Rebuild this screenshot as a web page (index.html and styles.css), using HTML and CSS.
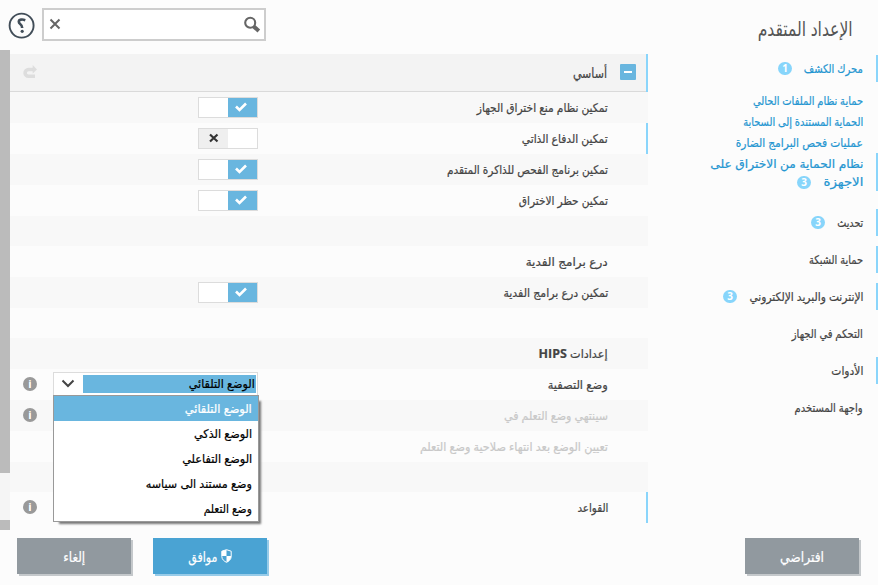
FILE: index.html
```html
<!DOCTYPE html>
<html lang="ar" dir="rtl">
<head>
    <meta charset="UTF-8">
    <meta name="viewport" content="width=device-width, initial-scale=1.0">
    <title>الإعداد المتقدم</title>
    <link rel="stylesheet" href="styles.css">
</head>
<body>
    <div class="window">
        <nav class="sidebar">
            <h1><span data-w="95">الإعداد المتقدم</span></h1>
            <a class="nav-item active changed"><span data-w="59">محرك الكشف</span><b class="badge">1</b></a>
            <div class="sub-nav">
                <a><span data-w="110">حماية نظام الملفات الحالي</span></a>
                <a><span data-w="120">الحماية المستندة إلى السحابة</span></a>
                <a><span data-w="127">عمليات فحص البرامج الضارة</span></a>
                <a class="changed two-lines"><span data-w="153">نظام الحماية من الاختراق على</span><br><span data-w="40">الاجهزة</span><b class="badge">3</b></a>
            </div>
            <a class="nav-item changed"><span data-w="26">تحديث</span><b class="badge">3</b></a>
            <a class="nav-item changed"><span data-w="54">حماية الشبكة</span></a>
            <a class="nav-item changed"><span data-w="114">الإنترنت والبريد الإلكتروني</span><b class="badge">3</b></a>
            <a class="nav-item"><span data-w="71">التحكم في الجهاز</span></a>
            <a class="nav-item changed"><span data-w="32">الأدوات</span></a>
            <a class="nav-item"><span data-w="68">واجهة المستخدم</span></a>
        </nav>

        <main class="content">
            <div class="topbar">
                <div class="search">
                    <svg class="magnifier" width="18" height="18" viewBox="0 0 18 18">
                        <circle cx="7.2" cy="6.8" r="5" fill="none" stroke="#666" stroke-width="2.1"/>
                        <path d="M10.5 10.2 L15.8 15" stroke="#666" stroke-width="4"/>
                    </svg>
                    <svg class="clear" width="12" height="12" viewBox="0 0 12 12">
                        <path d="M1.5 1.5 L10.5 10.5 M10.5 1.5 L1.5 10.5" stroke="#666" stroke-width="2"/>
                    </svg>
                </div>
                <svg class="help" width="28" height="28" viewBox="0 0 28 28">
                    <circle cx="13.6" cy="14.6" r="12" fill="none" stroke="#414d58" stroke-width="1.9"/>
                    <path d="M17.3 9.2 C14.5 8.2 10.8 8.2 10.8 10.8 C10.8 13.4 14.2 12.6 14.2 17" fill="none" stroke="#414d58" stroke-width="2.6"/>
                    <circle cx="14.2" cy="20.3" r="1.6" fill="#414d58"/>
                </svg>
            </div>

            <div class="scroll-area">
                <section class="panel">
                    <header class="panel-header changed">
                        <span class="collapse"></span>
                        <h2><span data-w="34">أساسي</span></h2>
                        <svg class="undo" width="14" height="14" viewBox="0 0 14 14">
                            <path d="M12 11.3 H5.5 A3.3 3.3 0 0 1 5.5 4.5 H10.5" fill="none" stroke="#ddd" stroke-width="3.6"/>
                            <path d="M9.7 0 L14 4.5 L9.7 8.5 Z" fill="#ddd"/>
                        </svg>
                    </header>
                    <div class="row">
                        <span data-w="131">تمكين نظام منع اختراق الجهاز</span>
                        <i class="toggle on"><svg width="12" height="10" viewBox="0 0 12 10"><path d="M1 4.5 L4.5 8 L11 1.5" fill="none" stroke="#fff" stroke-width="2.6"/></svg></i>
                    </div>
                    <div class="row changed">
                        <span data-w="86">تمكين الدفاع الذاتي</span>
                        <i class="toggle off"><svg width="10" height="10" viewBox="0 0 10 10"><path d="M1 1.5 L8.5 8.5 M8.5 1.5 L1 8.5" stroke="#333" stroke-width="2.2"/></svg></i>
                    </div>
                    <div class="row">
                        <span data-w="161">تمكين برنامج الفحص للذاكرة المتقدم</span>
                        <i class="toggle on"><svg width="12" height="10" viewBox="0 0 12 10"><path d="M1 4.5 L4.5 8 L11 1.5" fill="none" stroke="#fff" stroke-width="2.6"/></svg></i>
                    </div>
                    <div class="row">
                        <span data-w="89">تمكين حظر الاختراق</span>
                        <i class="toggle on"><svg width="12" height="10" viewBox="0 0 12 10"><path d="M1 4.5 L4.5 8 L11 1.5" fill="none" stroke="#fff" stroke-width="2.6"/></svg></i>
                    </div>
                    <div class="row spacer"></div>
                    <div class="row"><span data-w="82">درع برامج الفدية</span></div>
                    <div class="row">
                        <span data-w="105">تمكين درع برامج الفدية</span>
                        <i class="toggle on"><svg width="12" height="10" viewBox="0 0 12 10"><path d="M1 4.5 L4.5 8 L11 1.5" fill="none" stroke="#fff" stroke-width="2.6"/></svg></i>
                    </div>
                    <div class="row spacer"></div>
                    <div class="row"><span data-w="69">إعدادات <b>HIPS</b></span></div>
                    <div class="row">
                        <span data-w="60">وضع التصفية</span>
                        <div class="select">
                            <div class="select-value"><span data-w="66">الوضع التلقائي</span></div>
                            <svg class="chevron" width="14" height="9" viewBox="0 0 14 9"><path d="M1.5 1.5 L7 7 L12.5 1.5" fill="none" stroke="#444" stroke-width="2"/></svg>
                            <ul class="options">
                                <li class="selected"><span data-w="67">الوضع التلقائي</span></li>
                                <li><span data-w="58">الوضع الذكي</span></li>
                                <li><span data-w="70">الوضع التفاعلي</span></li>
                                <li><span data-w="106">وضع مستند الى سياسه</span></li>
                                <li><span data-w="48">وضع التعلم</span></li>
                            </ul>
                        </div>
                        <i class="info">i</i>
                    </div>
                    <div class="row disabled"><span data-w="104">سينتهي وضع التعلم في</span><i class="info">i</i></div>
                    <div class="row disabled"><span data-w="188">تعيين الوضع بعد انتهاء صلاحية وضع التعلم</span></div>
                    <div class="row spacer"></div>
                    <div class="row changed"><span data-w="31">القواعد</span><i class="info">i</i></div>
                </section>
                <div class="scrollbar"><div class="thumb"></div><div class="thumb-end"></div></div>
            </div>
        </main>
    </div>

    <footer class="buttons">
        <button class="btn"><span data-w="44">افتراضي</span></button>
        <button class="btn primary">
            <svg width="11" height="14" viewBox="0 0 11 14">
                <path d="M5.5 .7 L10.2 2.2 V7.5 C10.2 10.5 7.5 12.5 5.5 13.3 C3.5 12.5 .8 10.5 .8 7.5 V2.2 Z" fill="#4aa3d3" stroke="#fff"/>
                <path d="M5.5 .7 V7 H.8 V2.2 Z M5.5 7 H10.2 C10.2 10.5 7.5 12.5 5.5 13.3 Z" fill="#fff"/>
            </svg>
            <span data-w="29">موافق</span>
        </button>
        <button class="btn"><span data-w="22">إلغاء</span></button>
    </footer>

    <script src="labels.js"></script>
</body>
</html>
```
FILE: styles.css
```css
* {
    box-sizing: border-box;
}

body {
    width: 878px;
    height: 585px;
    margin: 0;
    overflow: hidden;
    background: #fcfcfc;
    color: #444;
    font-family: "Open Sans", "DejaVu Sans Condensed", "DejaVu Sans", sans-serif;
    font-size: 12px;
}

h1, h2 {
    margin: 0;
    font-weight: normal;
}

span[data-w] {
    display: inline-block;
    white-space: nowrap;
    transform-origin: right center;
    -webkit-text-stroke: 0.2px;
}

.window {
    display: flex;
    height: 530px;
}

/* Navigation */
.sidebar {
    width: 230px;
    display: flex;
    flex-direction: column;
    gap: 10px;
}

.sidebar h1 {
    height: 45px;
    padding: 14px 25px 0 0;
    font-size: 20px;
    line-height: 30px;
    color: #555;
}

.sidebar h1 span {
    -webkit-text-stroke: 0;
}

.nav-item {
    display: flex;
    align-items: center;
    height: 27px;
    padding-right: 13px;
    border-right: 2px solid transparent;
}

.active, .sub-nav {
    color: #2596d1;
}

.sub-nav {
    height: 107px;
    display: flex;
    flex-direction: column;
}

.sub-nav a {
    height: 21px;
    line-height: 18px;
    padding-right: 13px;
    border-right: 2px solid transparent;
}

.sub-nav .two-lines {
    height: 38px;
    margin-top: -2px;
    padding-top: 2px;
}

.sidebar .changed, .row.changed, .panel-header.changed {
    border-right-color: #8ad5fb;
}

.badge {
    display: inline-block;
    width: 14px;
    height: 13px;
    margin-right: 12px;
    border-radius: 7px;
    background: #87d5fb;
    color: #fff;
    font-size: 10px;
    line-height: 13px;
    text-align: center;
}

/* Search and help */
.content {
    width: 648px;
}

.topbar {
    height: 50px;
    display: flex;
    justify-content: flex-end;
    padding: 8px 0 0 8px;
    gap: 6px;
}

.search {
    width: 224px;
    height: 33px;
    display: flex;
    justify-content: space-between;
    align-items: center;
    padding: 0 3px 0 5px;
    border: 2px solid #cdcdcd;
    background: #fff;
}

.clear {
    margin-bottom: 1px;
}

.help {
    margin-top: 3px;
}

/* Settings */
.scroll-area {
    display: flex;
    height: 480px;
}

.panel {
    width: 638px;
    padding-top: 4px;
}

.panel-header {
    display: flex;
    align-items: center;
    height: 38px;
    padding: 0 10px 0 13px;
    border-right: 2px solid transparent;
    background: linear-gradient(#f3f3f3, #f3f3f3) padding-box;
    box-shadow: inset 0 -1px #dadada;
}

.panel-header h2 {
    margin: 0 13px 1px 0;
    font-size: 14px;
}

.collapse {
    display: flex;
    align-items: center;
    justify-content: center;
    width: 16px;
    height: 16px;
    margin-bottom: 2px;
    border-radius: 1px;
    background: #69b6df;
}

.collapse::after {
    content: "";
    width: 8px;
    height: 2px;
    background: #fff;
}

.undo {
    margin: 0 auto 2px 0;
}

.row {
    display: flex;
    align-items: center;
    height: 31px;
    padding: 0 38px 0 13px;
    border-right: 2px solid transparent;
}

.row:nth-child(even) {
    background: #f8f8f8;
}

.row.spacer {
    height: 30px;
}

.row.disabled {
    color: #c8c8c8;
}

.toggle {
    display: flex;
    align-items: center;
    width: 60px;
    height: 21px;
    margin: 0 auto 0 175px;
    border: 1px solid #dcdcdc;
}

.toggle svg {
    margin-bottom: 1px;
}

.toggle.on {
    padding-right: 10px;
    background: linear-gradient(to left, #69b6df 29px, #fff 29px);
}

.toggle.off {
    padding-right: 38px;
    background: linear-gradient(to right, #efefef 29px, #fff 29px);
}

.info {
    width: 14px;
    height: 14px;
    margin: 0 auto 2px 0;
    border-radius: 50%;
    background: #999;
    color: #fff;
    font-size: 11px;
    font-style: normal;
    font-weight: bold;
    line-height: 14px;
    text-align: center;
}

/* Drop-down */
.select {
    position: relative;
    display: flex;
    align-items: center;
    width: 205px;
    height: 24px;
    margin: 0 auto 2px 16px;
    padding: 0 1px 0 7px;
    border: 1px solid #dcdcdc;
    background: #fff;
    color: #000;
}

.select + .info {
    margin-right: 0;
}

.select-value {
    display: flex;
    align-items: center;
    width: 173px;
    height: 18px;
    padding-right: 1px;
    background: #69b6df;
}

.chevron {
    margin-right: 8px;
}

.options {
    position: absolute;
    top: 22px;
    left: -1px;
    z-index: 1;
    width: 206px;
    margin: 0;
    padding: 0;
    border: 1px solid #999;
    background: #fff;
    box-shadow: 4px 4px 2px -2px #777;
    list-style: none;
}

.options li {
    display: flex;
    align-items: center;
    height: 25px;
    padding-right: 6px;
}

.options .selected {
    background: #69b6df;
    color: #fff;
}

/* Scrollbar */
.scrollbar {
    display: flex;
    flex-direction: column;
    justify-content: space-between;
    width: 10px;
    background: #f5f5f5;
}

.thumb {
    height: 423px;
    background: #bbb;
}

.thumb-end {
    height: 10px;
    background: #bbb;
}

/* Buttons */
.buttons {
    display: flex;
    gap: 22px;
    padding: 8px 19px 0 17px;
}

.btn {
    display: flex;
    justify-content: center;
    align-items: center;
    gap: 3px;
    width: 114px;
    height: 36px;
    padding: 0;
    border: none;
    background: #91999f;
    box-shadow: 2px 2px #c4c8cb;
    color: #fff;
    font-family: inherit;
    font-size: 14px;
}

.btn.primary {
    margin-right: auto;
    background: #4aa3d3;
    box-shadow: 2px 2px #97cbe8;
}
```
FILE: labels.js
```js
document.querySelectorAll('span[data-w]').forEach(function (label) {
    const natural = label.getBoundingClientRect().width;
    const width = Number(label.dataset.w);
    label.style.transform = 'scaleX(' + width / natural + ')';
    label.style.marginLeft = (width - natural) + 'px';
});
```
